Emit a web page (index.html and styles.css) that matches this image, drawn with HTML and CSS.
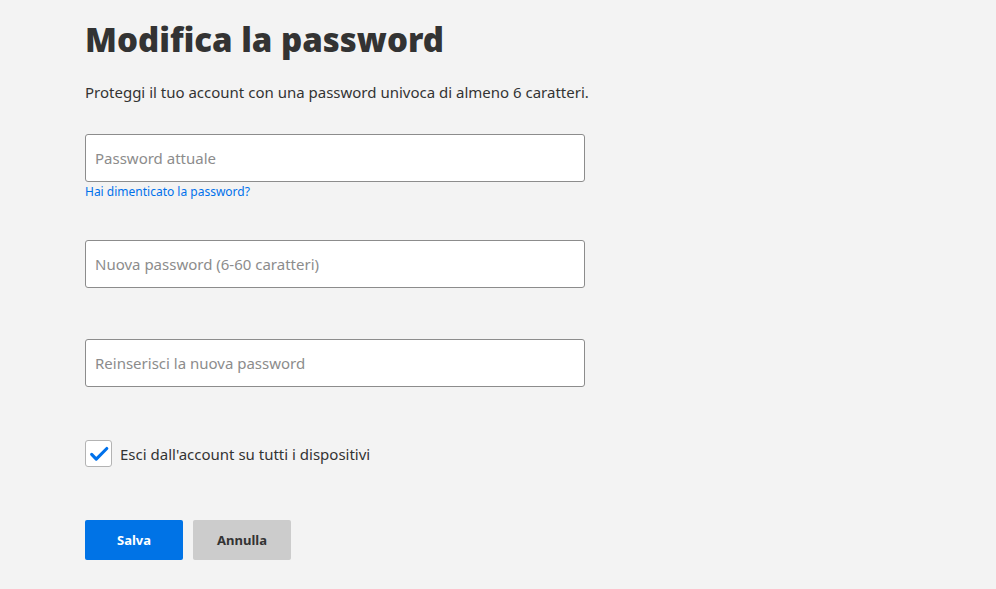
FILE: index.html
```html
<!DOCTYPE html>
<html lang="it">
<head>
<meta charset="utf-8">
<title>Modifica la password</title>
<link rel="stylesheet" href="styles.css">
</head>
<body>
<main class="page">
  <h1 class="title">Modifica la password</h1>
  <p class="lead">Proteggi il tuo account con una password univoca di almeno 6 caratteri.</p>
  <form class="form">
    <div class="field">
      <input class="input" type="password" placeholder="Password attuale">
      <a class="forgot" href="#">Hai dimenticato la password?</a>
    </div>
    <div class="field field-2">
      <input class="input" type="password" placeholder="Nuova password (6-60 caratteri)">
    </div>
    <div class="field field-3">
      <input class="input" type="password" placeholder="Reinserisci la nuova password">
    </div>
    <label class="check">
      <span class="box">
        <svg viewBox="0 0 24 24" width="22" height="22"><path d="M4 12.5l5 5L20.5 6" fill="none" stroke="#0071eb" stroke-width="3.4" stroke-linecap="round" stroke-linejoin="round"/></svg>
      </span>
      <span class="check-label">Esci dall'account su tutti i dispositivi</span>
    </label>
    <div class="actions">
      <button type="button" class="btn btn-primary">Salva</button>
      <button type="button" class="btn btn-secondary">Annulla</button>
    </div>
  </form>
</main>
</body>
</html>
```
FILE: styles.css
```css
html, body {
  margin: 0;
  padding: 0;
  background: #f3f3f3;
}
body {
  font-family: "Noto Sans", "Open Sans", sans-serif;
  color: #333;
}
.page {
  padding: 18px 0 0 85px;
}
.title {
  margin: 0;
  font-family: "Noto Sans", sans-serif;
  font-weight: 900;
  font-size: 33px;
  line-height: 44px;
  color: #333;
  letter-spacing: 0;
}
.lead {
  margin: 20px 0 0;
  font-size: 15px;
  line-height: 20px;
  color: #333;
}
.form {
  margin-top: 32px;
  display: flex;
  flex-direction: column;
}
.field {
  width: 500px;
  display: flex;
  flex-direction: column;
}
.field-2 { margin-top: 40px; }
.field-3 { margin-top: 51px; }
.input {
  box-sizing: border-box;
  width: 500px;
  height: 48px;
  border: 1px solid #8c8c8c;
  border-radius: 3px;
  background: #fff;
  padding: 0 9px;
  font-family: inherit;
  font-size: 15px;
  color: #333;
  outline: none;
}
.input::placeholder { color: #8c8c8c; }
.forgot {
  margin-top: 2px;
  font-size: 12px;
  line-height: 16px;
  color: #0071eb;
  text-decoration: none;
}
.check {
  margin-top: 53px;
  display: flex;
  align-items: center;
  gap: 8px;
}
.box {
  box-sizing: border-box;
  width: 27px;
  height: 27px;
  border: 1px solid #b3b3b3;
  border-radius: 3px;
  background: #fff;
  display: flex;
  align-items: center;
  justify-content: center;
}
.check-label {
  font-size: 15px;
  color: #333;
}
.actions {
  margin-top: 53px;
  display: flex;
  gap: 10px;
}
.btn {
  width: 98px;
  height: 40px;
  border: 0;
  border-radius: 2px;
  font-family: inherit;
  font-size: 13px;
  font-weight: 700;
  cursor: pointer;
}
.btn-primary { background: #0073e6; color: #fff; }
.btn-secondary { background: #ccc; color: #333; }
```
